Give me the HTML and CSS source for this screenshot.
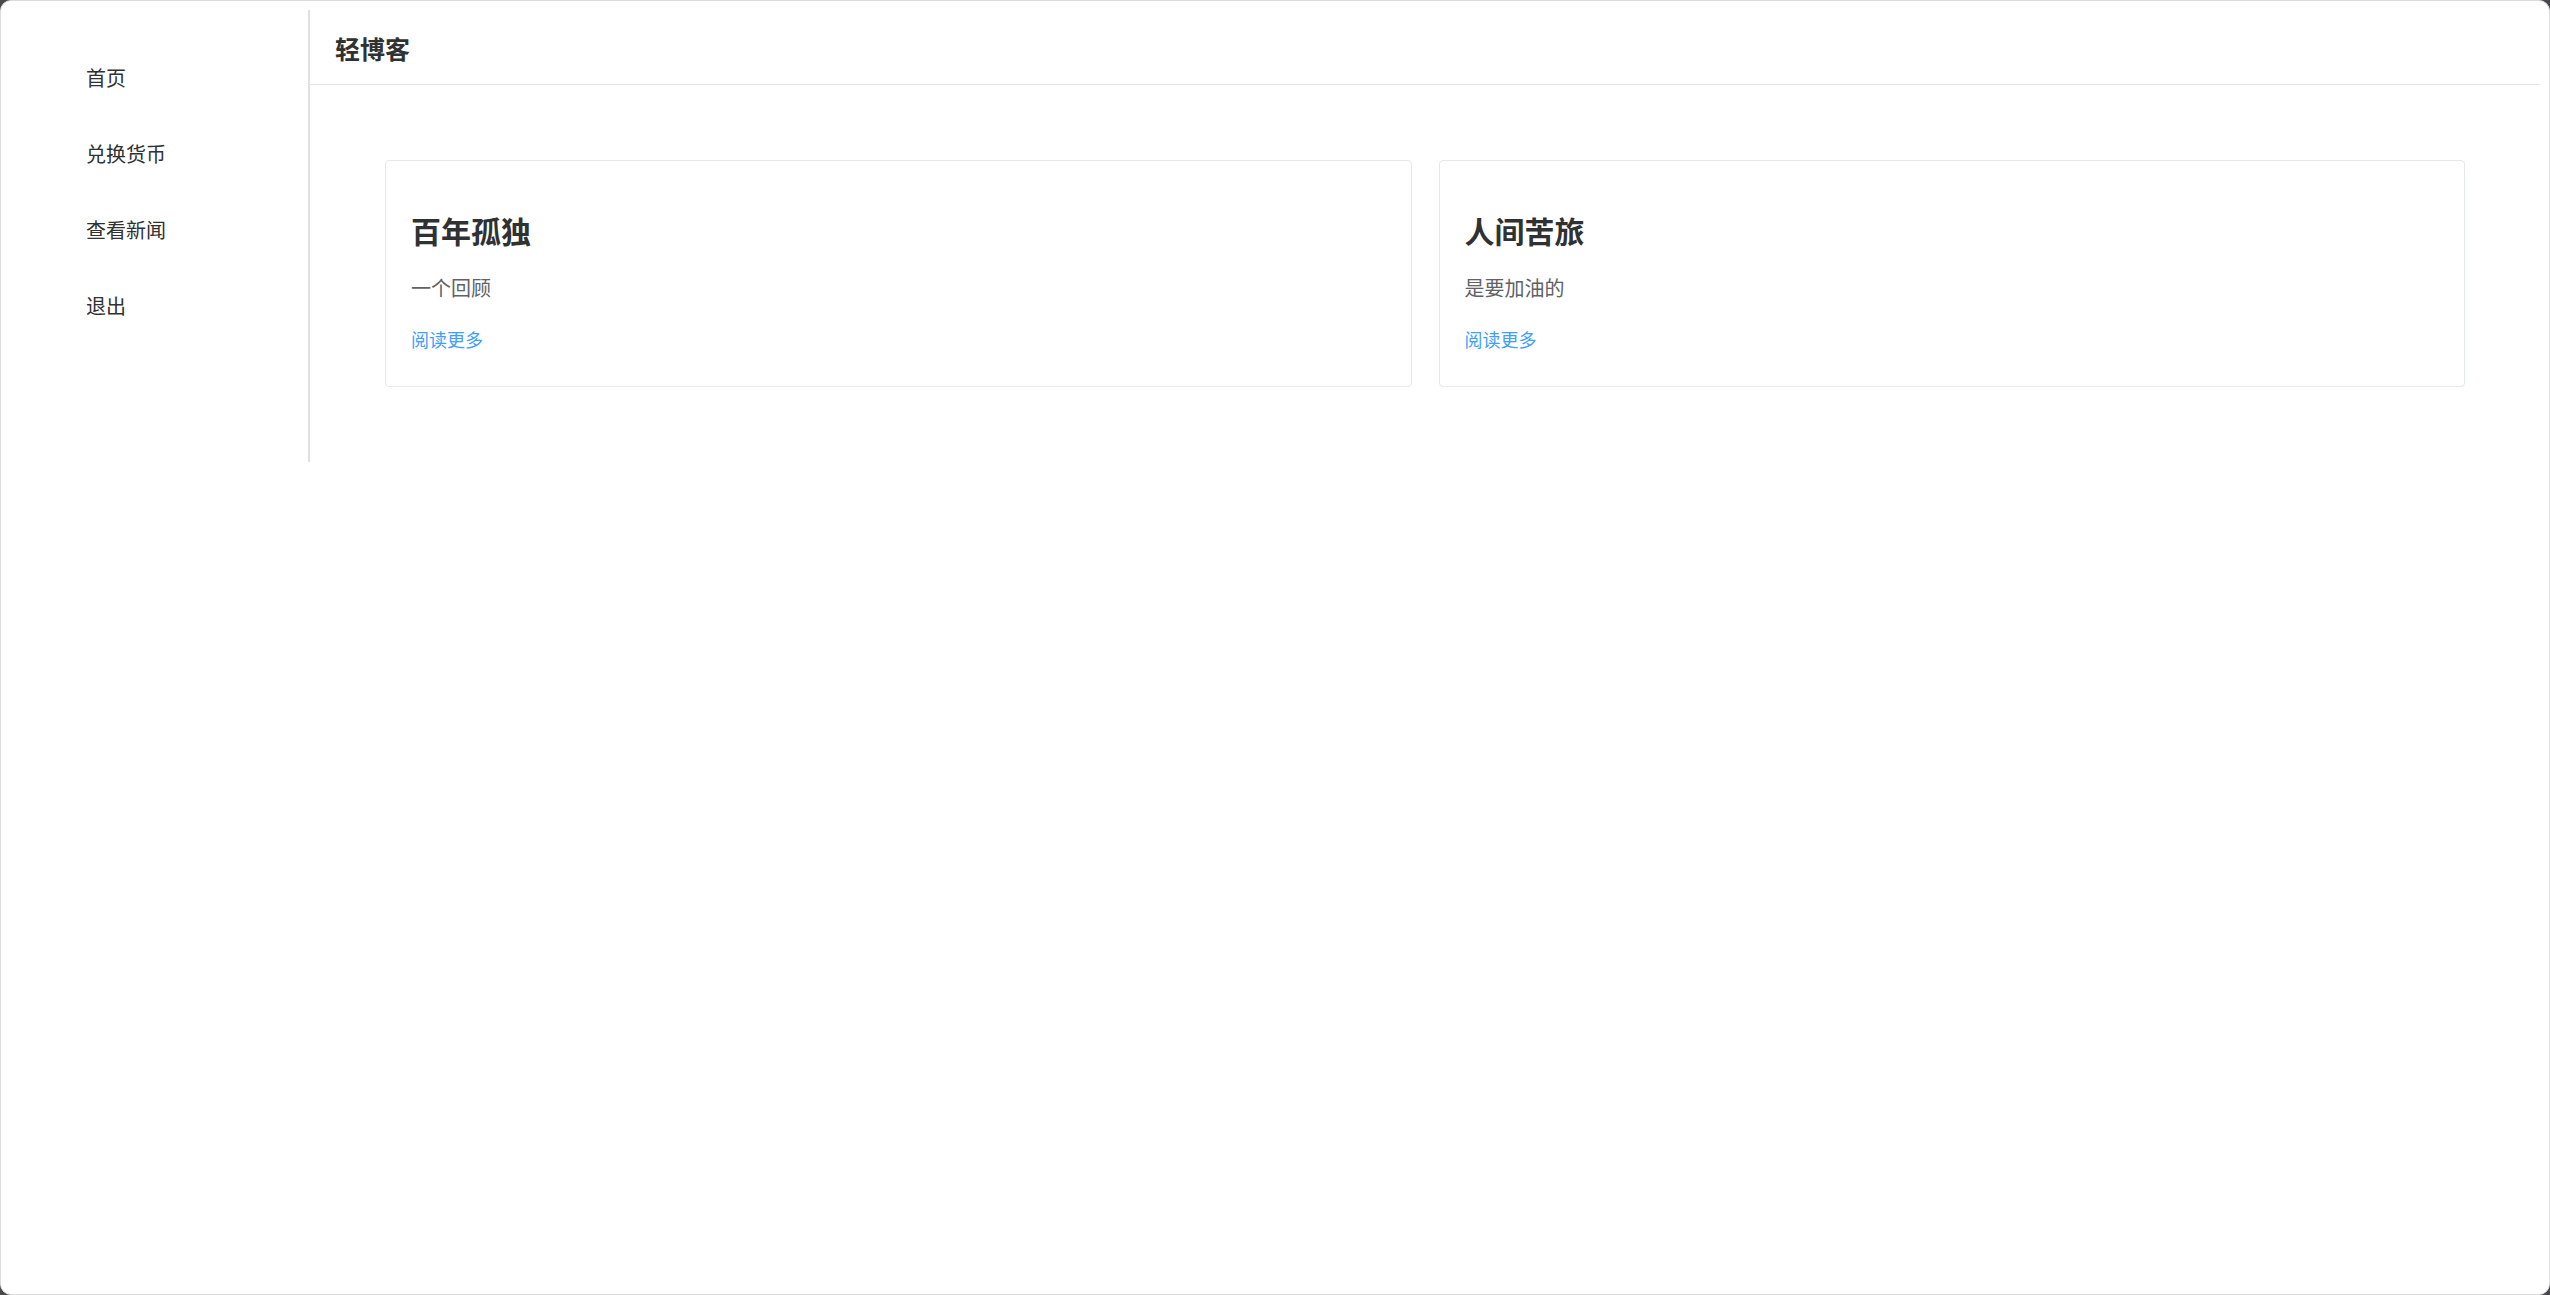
FILE: index.html
```html
<!DOCTYPE html>
<html lang="zh-CN">
<head>
<meta charset="utf-8">
<title>轻博客</title>
<link rel="stylesheet" href="styles.css">
</head>
<body>
<div class="window">
  <div class="layout">
    <aside class="sidebar">
      <ul class="menu">
        <li class="menu-item">首页</li>
        <li class="menu-item">兑换货币</li>
        <li class="menu-item">查看新闻</li>
        <li class="menu-item">退出</li>
      </ul>
    </aside>
    <main class="main">
      <header class="header">
        <h1 class="brand">轻博客</h1>
      </header>
      <section class="content">
        <article class="card">
          <h2 class="card-title">百年孤独</h2>
          <p class="card-desc">一个回顾</p>
          <a class="card-link" href="#">阅读更多</a>
        </article>
        <article class="card">
          <h2 class="card-title">人间苦旅</h2>
          <p class="card-desc">是要加油的</p>
          <a class="card-link" href="#">阅读更多</a>
        </article>
      </section>
    </main>
  </div>
</div>
</body>
</html>
```
FILE: styles.css
```css
html, body {
  margin: 0;
  padding: 0;
  height: 100%;
}
body {
  background: #48484d;
  font-family: "Noto Sans CJK SC", "Noto Sans", sans-serif;
}
.window {
  box-sizing: border-box;
  height: 100vh;
  background: #ffffff;
  border: 1px solid #dcdcdc;
  border-radius: 11px;
  padding: 9px 9px 0 9px;
  overflow: hidden;
}
.layout {
  display: flex;
  align-items: stretch;
}
.sidebar {
  box-sizing: border-box;
  width: 300px;
  flex: none;
  border-right: 2px solid #e0e0e0;
  padding-top: 30px;
  padding-left: 76px;
}
.menu {
  list-style: none;
  margin: 0;
  padding: 0;
}
.menu-item {
  height: 76px;
  line-height: 76px;
  font-size: 20px;
  color: #303133;
}
.main {
  flex: 1;
  min-width: 0;
}
.header {
  box-sizing: border-box;
  height: 75px;
  border-bottom: 1px solid #e4e4e4;
  display: flex;
  align-items: center;
  padding-left: 25px;
}
.brand {
  margin: 0;
  font-size: 25px;
  line-height: 30px;
  font-weight: 700;
  color: #303133;
  padding-top: 1px;
}
.content {
  padding: 75px;
  display: grid;
  grid-template-columns: 1fr 1fr;
  gap: 27px;
}
.card {
  box-sizing: border-box;
  border: 1px solid #e4e7ed;
  border-radius: 4px;
  padding: 25px 25px 38px 25px;
  display: flex;
  flex-direction: column;
  align-items: flex-start;
}
.card-title {
  margin: 29px 0 0 0;
  font-size: 30px;
  line-height: 30px;
  font-weight: 700;
  color: #303133;
}
.card-desc {
  margin: 33px 0 0 0;
  font-size: 20px;
  line-height: 20px;
  color: #606266;
}
.card-link {
  margin-top: 32px;
  font-size: 18px;
  line-height: 18px;
  color: #409eff;
  text-decoration: none;
}
```
